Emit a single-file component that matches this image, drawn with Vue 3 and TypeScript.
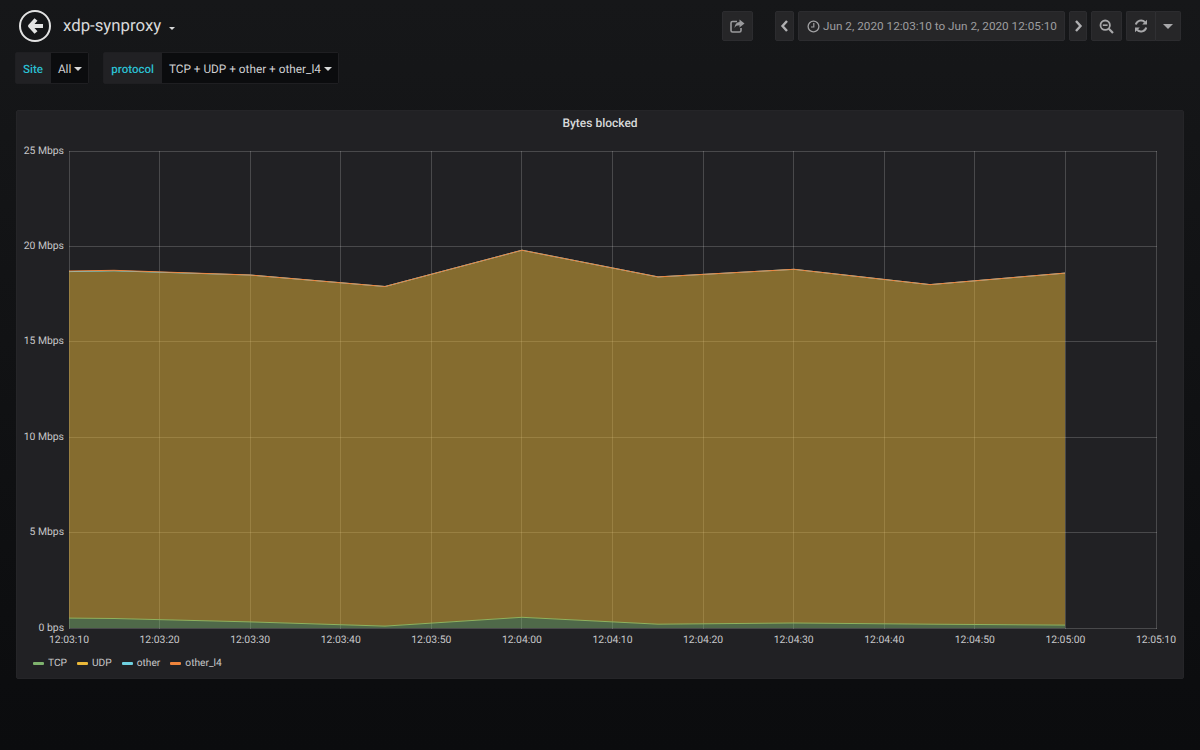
<script setup lang="ts">
const X0 = 69, X1 = 1156, Y0 = 628, Y1 = 151
const xs = Array.from({ length: 13 }, (_, i) => X0 + ((X1 - X0) * i) / 12)
const xLabels = ['12:03:10','12:03:20','12:03:30','12:03:40','12:03:50','12:04:00','12:04:10','12:04:20','12:04:30','12:04:40','12:04:50','12:05:00','12:05:10']
const yTicks = [0, 5, 10, 15, 20, 25].map((v) => ({ v, y: Y0 - ((Y0 - Y1) * v) / 25, label: v === 0 ? '0 bps' : `${v} Mbps` }))
const crisp = (n: number) => Math.floor(n) + 0.5
const px = [69, 114, 250, 385, 522, 658, 794, 930, 1065]
const tcp = [0.52, 0.5, 0.32, 0.1, 0.56, 0.2, 0.26, 0.2, 0.15]
const top = [18.71, 18.75, 18.5, 17.9, 19.8, 18.4, 18.8, 18.0, 18.6]
const udp = top.map((v, i) => (i < 2 ? v - 0.03 : v))
const yOf = (v: number) => Y0 - ((Y0 - Y1) * v) / 25
const line = (a: number[]) => a.map((v, i) => `${px[i]},${yOf(v).toFixed(1)}`).join(' ')
const band = (hi: number[], lo: number[] | null) => {
  const upper = hi.map((v, i) => `${px[i]},${yOf(v).toFixed(1)}`)
  const lower = (lo ?? hi.map(() => 0)).map((v, i) => `${px[i]},${yOf(v).toFixed(1)}`).reverse()
  return [...upper, ...lower].join(' ')
}
const series = [
  { name: 'TCP', color: '#7eb26d' },
  { name: 'UDP', color: '#eab839' },
  { name: 'other', color: '#6ed0e0' },
  { name: 'other_l4', color: '#ef843c' },
]
</script>

<template>
  <div class="page">
    <header class="nav">
      <a class="back" aria-label="Back">
        <svg width="32" height="32" viewBox="0 0 32 32">
          <circle cx="16" cy="16" r="15" fill="none" stroke="#e3e3e3" stroke-width="2" />
          <path d="M17 9.5 L11 16 L17 22.5 M11.5 16 H24" fill="none" stroke="#e3e3e3" stroke-width="4" stroke-linejoin="round" />
        </svg>
      </a>
      <h1 class="title">xdp-synproxy</h1>
      <span class="caret title-caret"></span>
      <div class="toolbar">
        <button class="btn share" aria-label="Share">
          <svg width="15" height="14" viewBox="0 0 15 14" fill="none">
            <path d="M7 2.5H2.5A1.5 1.5 0 0 0 1 4v7.5A1.5 1.5 0 0 0 2.5 13h7a1.5 1.5 0 0 0 1.5-1.5V9" stroke="#9a9a9c" stroke-width="1.6" />
            <path d="M9.5 0.5 L14.5 4.5 L9.5 8.5 V6.3 C7 6.3 5.5 7 4.5 9 C4.7 5.5 6.5 3.2 9.5 2.9 Z" fill="#9a9a9c" />
          </svg>
        </button>
        <div class="range">
          <button class="btn arrow" aria-label="Previous">
            <svg width="9" height="12" viewBox="0 0 9 12"><path d="M7 1 L2.5 6 L7 11" fill="none" stroke="#b0b0b2" stroke-width="2.4" /></svg>
          </button>
          <button class="btn time">
            <svg class="clock" width="13" height="13" viewBox="0 0 13 13" fill="none">
              <circle cx="6.5" cy="6.5" r="5.4" stroke="#a0a0a2" stroke-width="1.3" />
              <path d="M6.8 3 V7 H4" stroke="#a0a0a2" stroke-width="1.2" />
            </svg>
            <span>Jun 2, 2020 12:03:10 to Jun 2, 2020 12:05:10</span>
          </button>
          <button class="btn arrow next" aria-label="Next">
            <svg width="9" height="12" viewBox="0 0 9 12"><path d="M2 1 L6.5 6 L2 11" fill="none" stroke="#b0b0b2" stroke-width="2.4" /></svg>
          </button>
          <button class="btn zoom" aria-label="Zoom out">
            <svg width="15" height="15" viewBox="0 0 15 15" fill="none">
              <circle cx="6.2" cy="6.2" r="4.7" stroke="#a8a8aa" stroke-width="1.8" />
              <path d="M9.8 9.8 L14 14" stroke="#a8a8aa" stroke-width="2.2" />
              <path d="M3.8 6.2 H8.6" stroke="#a8a8aa" stroke-width="1.6" />
            </svg>
          </button>
          <div class="refresh">
            <button class="btn seg" aria-label="Refresh">
              <svg width="14" height="14" viewBox="0 0 14 14" fill="none">
                <path d="M1.8 5.6 A5.4 5.4 0 0 1 11 3.2" stroke="#a8a8aa" stroke-width="2" />
                <path d="M13 0.8 V5.6 H8.2 Z" fill="#a8a8aa" />
                <path d="M12.2 8.4 A5.4 5.4 0 0 1 3 10.8" stroke="#a8a8aa" stroke-width="2" />
                <path d="M1 13.2 V8.4 H5.8 Z" fill="#a8a8aa" />
              </svg>
            </button>
            <button class="btn seg drop" aria-label="Refresh interval"><span class="caret big"></span></button>
          </div>
        </div>
      </div>
    </header>

    <section class="vars">
      <div class="var">
        <label class="var-label">Site</label>
        <span class="var-value">All<span class="caret"></span></span>
      </div>
      <div class="var">
        <label class="var-label">protocol</label>
        <span class="var-value">TCP + UDP + other + other_l4<span class="caret"></span></span>
      </div>
    </section>

    <section class="panel">
      <h2 class="panel-title">Bytes blocked</h2>
      <svg class="chart" width="1168" height="513" viewBox="16 137 1168 513">
        <g stroke="#fff" stroke-opacity="0.18" stroke-width="1">
          <line v-for="x in xs" :key="x" :x1="crisp(x)" :x2="crisp(x)" :y1="Y1" :y2="Y0 + 1" />
          <line v-for="t in yTicks" :key="t.v" :x1="X0" :x2="X1 + 1" :y1="crisp(t.y)" :y2="crisp(t.y)" />
        </g>
        <polygon :points="band(tcp, null)" fill="#7eb26d" fill-opacity="0.5" />
        <polygon :points="band(udp, tcp)" fill="#eab839" fill-opacity="0.5" />
        <polyline :points="line(tcp)" fill="none" stroke="#8fb25f" stroke-width="1" />
        <polyline :points="line(udp)" fill="none" stroke="#6ed0e0" stroke-width="1" />
        <polyline :points="line(top)" fill="none" stroke="#ef843c" stroke-width="1" />
        <text v-for="t in yTicks" :key="t.label" class="tick" :x="64" :y="t.y + 2.5" text-anchor="end">{{ t.label }}</text>
        <text v-for="(l, i) in xLabels" :key="l" class="tick" :x="xs[i]" y="643" text-anchor="middle">{{ l }}</text>
      </svg>
      <ul class="legend">
        <li v-for="s in series" :key="s.name">
          <i class="swatch" :style="{ background: s.color }"></i>{{ s.name }}
        </li>
      </ul>
    </section>
  </div>
</template>

<style>
html, body { margin: 0; background: #0b0c0e; }
</style>

<style scoped>
.page {
  width: 1200px;
  height: 750px;
  box-sizing: border-box;
  overflow: hidden;
  background: linear-gradient(#161719, #0b0c0e);
  font-family: Roboto, "Liberation Sans", sans-serif;
  color: #d8d9da;
  text-rendering: geometricPrecision;
}
button { font: inherit; color: inherit; padding: 0; }
.nav { height: 52px; display: flex; align-items: center; padding: 0 19px; box-sizing: border-box; }
.back { display: block; width: 32px; height: 32px; }
.back svg { display: block; }
.title { margin: 0 0 0 12px; font-size: 16.8px; font-weight: 400; color: #d8d9da; }
.caret { display: inline-block; width: 0; height: 0; border-left: 4px solid transparent; border-right: 4px solid transparent; border-top: 4px solid #d8d9da; margin-left: 3px; }
.title-caret { margin: 4px 0 0 8px; border-width: 3px 3px 0; border-left-color: transparent; border-right-color: transparent; }
.toolbar { margin-left: auto; display: flex; align-items: center; gap: 22px; }
.range { display: flex; gap: 4px; }
.btn {
  height: 30px;
  display: flex;
  align-items: center;
  justify-content: center;
  background: #262628;
  border: 1px solid #2c2c2f;
  border-radius: 2px;
  box-sizing: border-box;
}
.share { width: 31px; }
.arrow { width: 19px; }
.next { width: 18px; }
.time { width: 267px; gap: 3px; font-size: 11.75px; color: #9d9d9f; justify-content: flex-start; padding-left: 8px; white-space: nowrap; }
.clock { flex: none; }
.zoom { width: 31px; }
.refresh { display: flex; }
.seg { width: 29px; border-right: 0; border-radius: 2px 0 0 2px; }
.drop { width: 26px; border-left: 1px solid #303033; border-right: 1px solid #2c2c2f; border-radius: 0 2px 2px 0; }
.caret.big { margin: 0; border-width: 5px 5px 0; border-top-color: #a8a8aa; border-left-color: transparent; border-right-color: transparent; }
.vars { display: flex; gap: 14px; padding-left: 15px; height: 32px; }
.var { display: flex; height: 32px; box-sizing: border-box; border: 1px solid #1f1f22; border-radius: 2px; }
.var-label {
  display: flex; align-items: center; padding: 1px 8px 0 7px;
  background: #212124; color: #2bbfd0; font-size: 11.5px; font-weight: 500;
}
.var-value {
  display: flex; align-items: center; padding: 1px 6px 0 7px;
  background: #0b0c0e; color: #d0d0d2; font-size: 11.8px;
}
.panel {
  margin: 26px 16px 0;
  height: 569px;
  background: #212124;
  border: 1px solid #252528;
  box-sizing: border-box;
  border-radius: 2px;
  display: flex;
  flex-direction: column;
}
.panel-title { margin: 0; height: 26px; line-height: 25px; text-align: center; font-size: 12px; font-weight: 500; color: #d8d9da; }
.chart { display: block; flex: none; margin-left: -1px; }
.tick { font-size: 10.4px; fill: #c8c8ca; font-family: Roboto, "Liberation Sans", sans-serif; }
.legend { list-style: none; margin: 0; padding: 6px 0 0 16px; display: flex; gap: 10px; font-size: 10.2px; line-height: 15px; color: #c8c8ca; }
.legend li { display: flex; align-items: center; }
.swatch { width: 11px; height: 3px; border-radius: 1px; margin-right: 4px; }
</style>
